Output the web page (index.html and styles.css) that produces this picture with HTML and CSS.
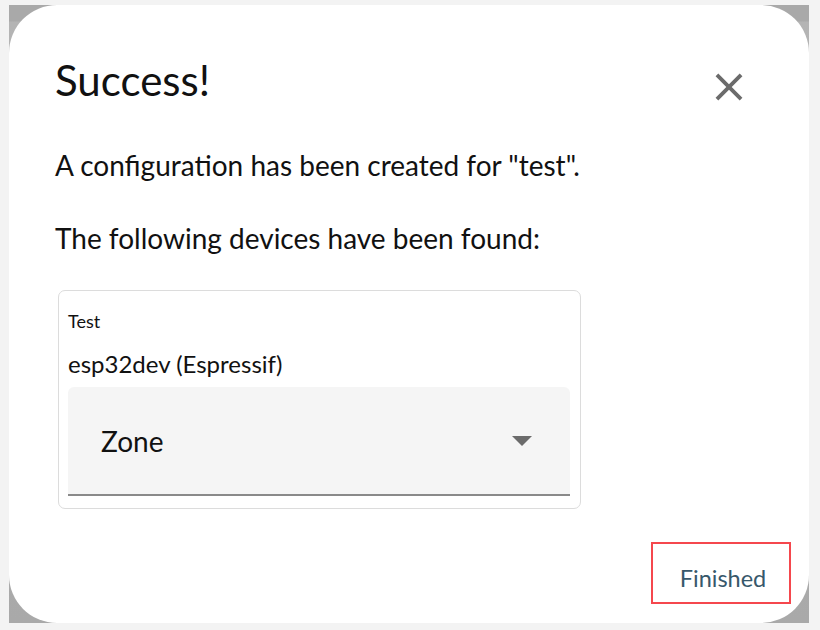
FILE: index.html
```html
<!DOCTYPE html>
<html lang="en">
<head>
<meta charset="UTF-8" />
<meta name="viewport" content="width=device-width, initial-scale=1.0" />
<title>Success</title>
<link rel="stylesheet" href="styles.css">
</head>
<body>
  <div class="backdrop">
    <div class="dialog">
      <div class="dialog-header">
        <h1>Success!</h1>
        <button class="close-btn" aria-label="Close">
          <svg width="46" height="46" viewBox="0 0 24 24"><path d="M19 6.41L17.59 5 12 10.59 6.41 5 5 6.41 10.59 12 5 17.59 6.41 19 12 13.41 17.59 19 19 17.59 13.41 12z" fill="#6b6b6b"/></svg>
        </button>
      </div>

      <p class="message">A configuration has been created for "test".</p>
      <p class="message">The following devices have been found:</p>

      <div class="device-card">
        <div class="device-name">Test</div>
        <div class="device-board">esp32dev (Espressif)</div>
        <div class="zone-select">
          <span>Zone</span>
          <svg class="arrow" width="20" height="10" viewBox="0 0 20 10"><path d="M0 0h20L10 10z" fill="#6b6b6b"/></svg>
        </div>
      </div>

      <div class="dialog-actions">
        <button class="finish-btn">Finished</button>
      </div>
    </div>
  </div>
</body>
</html>
```

FILE: styles.css
```css
* {
  box-sizing: border-box;
}

body {
  margin: 0;
  background-color: #f3f3f3;
  padding: 5px 11px 7px 9px;
  font-family: Lato, "Noto Sans", sans-serif;
  color: #111;
}

.backdrop {
  width: 800px;
  height: 618px;
  background: linear-gradient(#a9a9a9 0, #a9a9a9 16px, #b4b4b4 17px, #a9a9a9 100%);
}

.dialog {
  height: 100%;
  background: white;
  border-radius: 48px;
  padding: 45px 18px 0 46px;
  display: flex;
  flex-direction: column;
}

.dialog-header {
  display: flex;
  align-items: center;
  justify-content: space-between;
}

h1 {
  margin: 0;
  font-size: 42px;
  font-weight: 400;
  line-height: 60px;
}

.close-btn {
  background: none;
  border: none;
  padding: 0;
  margin-right: 39px;
  margin-top: 14px;
  display: flex;
}

.message {
  margin: 0;
  font-size: 28px;
  line-height: 36px;
}

.message:first-of-type {
  margin-top: 37px;
}

.message + .message {
  margin-top: 37px;
}

.device-card {
  margin-top: 34px;
  margin-left: 3px;
  width: 523px;
  height: 219px;
  border: 1.5px solid #dcdcdc;
  border-radius: 7px;
  padding: 18px 10px 0 9px;
}

.device-name {
  font-size: 18px;
  line-height: 24px;
}

.device-board {
  margin-top: 15px;
  font-size: 24px;
  line-height: 32px;
}

.zone-select {
  margin-top: 7px;
  height: 109px;
  background: #f5f5f5;
  border-radius: 6px 6px 0 0;
  border-bottom: 2px solid #8a8a8a;
  display: flex;
  align-items: center;
  justify-content: space-between;
  padding: 0 38px 0 33px;
  font-size: 28px;
}

.dialog-actions {
  margin-top: auto;
  margin-bottom: 19px;
  display: flex;
  justify-content: flex-end;
}

.finish-btn {
  width: 140px;
  height: 62px;
  background: white;
  border: 2px solid #f5474d;
  font-family: inherit;
  font-size: 23.5px;
  color: #37586b;
  padding: 10px 0 0 4px;
}
```
